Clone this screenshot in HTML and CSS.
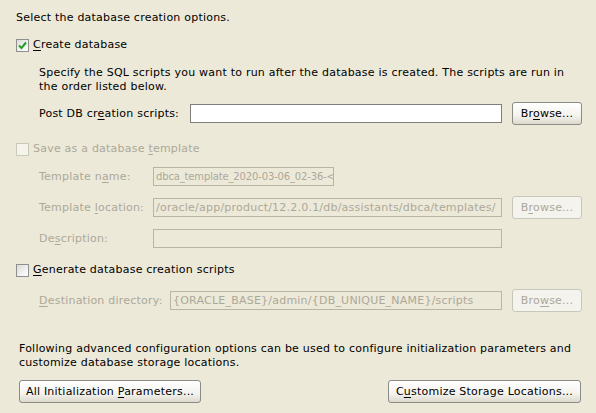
FILE: index.html
```html
<!DOCTYPE html>
<html lang="en">
<head>
  <meta charset="UTF-8" />
  <title>Database Options</title>
  <meta name="viewport" content="width=device-width, initial-scale=1.0">
  <link rel="stylesheet" href="styles.css">
</head>
<body>
  <div class="page">
    <p class="intro">Select the database creation options.</p>

    <div class="check check-create">
      <span class="box">
        <svg width="9" height="9" viewBox="0 0 9 9"><path d="M1 4.5 L3.5 7 L8 1.5" fill="none" stroke="#21a121" stroke-width="2"/></svg>
      </span>
      <span><u>C</u>reate database</span>
    </div>

    <div class="indent">
      <p class="note">Specify the SQL scripts you want to run after the database is created. The scripts are run in the order listed below.</p>
      <div class="row row-post">
        <span class="lbl lbl-post">Post DB cr<u>e</u>ation scripts:</span>
        <div class="field field-post"></div>
        <button class="btn btn-browse">Br<u>o</u>wse...</button>
      </div>
    </div>

    <div class="check check-save off">
      <span class="box"></span>
      <span>Save as a database <u>t</u>emplate</span>
    </div>

    <div class="indent off">
      <div class="row row-tname">
        <span class="lbl lbl-tpl">Template n<u>a</u>me:</span>
        <div class="field field-tname">dbca_template_2020-03-06_02-36-&lt;</div>
      </div>
      <div class="row row-tloc">
        <span class="lbl lbl-tpl">Template <u>l</u>ocation:</span>
        <div class="field field-long">/oracle/app/product/12.2.0.1/db/assistants/dbca/templates/</div>
        <button class="btn btn-browse" disabled>B<u>r</u>owse...</button>
      </div>
      <div class="row row-desc">
        <span class="lbl lbl-tpl">De<u>s</u>cription:</span>
        <div class="field field-long"></div>
      </div>
    </div>

    <div class="check check-gen">
      <span class="box"></span>
      <span><u>G</u>enerate database creation scripts</span>
    </div>

    <div class="indent off">
      <div class="row row-dest">
        <span class="lbl lbl-dest"><u>D</u>estination directory:</span>
        <div class="field field-dest">{ORACLE_BASE}/admin/{DB_UNIQUE_NAME}/scripts</div>
        <button class="btn btn-browse" disabled>Bro<u>w</u>se...</button>
      </div>
    </div>

    <div class="advanced">
      <p class="note">Following advanced configuration options can be used to configure initialization parameters and customize database storage locations.</p>
      <div class="actions">
        <button class="btn btn-params">All Initialization <u>P</u>arameters...</button>
        <button class="btn btn-storage">C<u>u</u>stomize Storage Locations...</button>
      </div>
    </div>
  </div>
</body>
</html>
```

FILE: styles.css
```css
body {
  margin: 0;
  background: #ece9d8;
  font-family: "DejaVu Sans", sans-serif;
  font-size: 11px;
  letter-spacing: 0.22px;
  color: #000000;
}
.page {
  width: 596px;
  height: 413px;
  box-sizing: border-box;
  padding: 11px 0 0 16px;
}
p {
  margin: 0;
}
.intro {
  line-height: 14px;
}
u {
  text-decoration-thickness: 1px;
  text-underline-offset: 2px;
}

/* checkboxes */
.check {
  display: flex;
  align-items: center;
  height: 14px;
  line-height: 14px;
}
.check-create {
  margin-top: 13px;
}
.check-save {
  margin-top: 17px;
}
.check-gen {
  margin-top: 13px;
}
.box {
  width: 11px;
  height: 11px;
  border: 1px solid #8e8f8f;
  background: linear-gradient(135deg, #dcdcd7, #ffffff);
  margin-right: 4px;
  display: flex;
  align-items: center;
  justify-content: center;
}
.check.off {
  color: #aca899;
}
.check.off .box {
  border-color: #cac8bb;
  background: #f5f4ea;
}

/* indented blocks */
.indent {
  padding-left: 23px;
}
.indent.off {
  color: #aca899;
}
.note {
  line-height: 14px;
  margin-top: 14px;
  width: 540px;
}
.row {
  display: flex;
  align-items: center;
  height: 23px;
}
.row-post {
  margin-top: 8px;
}
.row-tname {
  margin-top: 9px;
}
.row-tloc, .row-desc {
  margin-top: 8px;
}
.row-dest {
  margin-top: 12px;
}
.lbl {
  flex: none;
}
.lbl-post {
  width: 151px;
}
.lbl-tpl {
  width: 114px;
}
.lbl-dest {
  width: 131px;
}

/* text fields */
.field {
  height: 19px;
  box-sizing: border-box;
  border: 1px solid #7f7f7f;
  background: #ffffff;
  padding: 0 2px;
  line-height: 17px;
  white-space: nowrap;
  overflow: hidden;
}
.off .field {
  border-color: #b9b5a6;
  background: #ece9d8;
  color: #aca899;
}
.field-post {
  width: 312px;
}
.field-tname {
  width: 181px;
  font-size: 10px;
  letter-spacing: -0.15px;
}
.field-long {
  width: 349px;
}
.field-dest {
  width: 332px;
}

/* buttons */
.btn {
  font-family: "DejaVu Sans", sans-serif;
  font-size: 11px;
  letter-spacing: 0.22px;
  height: 23px;
  box-sizing: border-box;
  border: 1px solid #8b8b88;
  border-radius: 3px;
  background: linear-gradient(180deg, #ffffff 0%, #f4f3ee 60%, #dcd9cc 100%);
  color: #000000;
  padding: 0;
  cursor: pointer;
}
.btn:disabled {
  border-color: #c9c7ba;
  background: #f4f3ee;
  color: #aca899;
}
.btn-browse {
  width: 70px;
  margin-left: 10px;
}

/* advanced section */
.advanced {
  padding-left: 3px;
  margin-top: 30px;
}
.advanced .note {
  margin-top: 0;
  width: 562px;
}
.actions {
  display: flex;
  justify-content: space-between;
  width: 562px;
  margin-top: 10px;
}
.btn-params {
  width: 182px;
}
.btn-storage {
  width: 193px;
}
```
